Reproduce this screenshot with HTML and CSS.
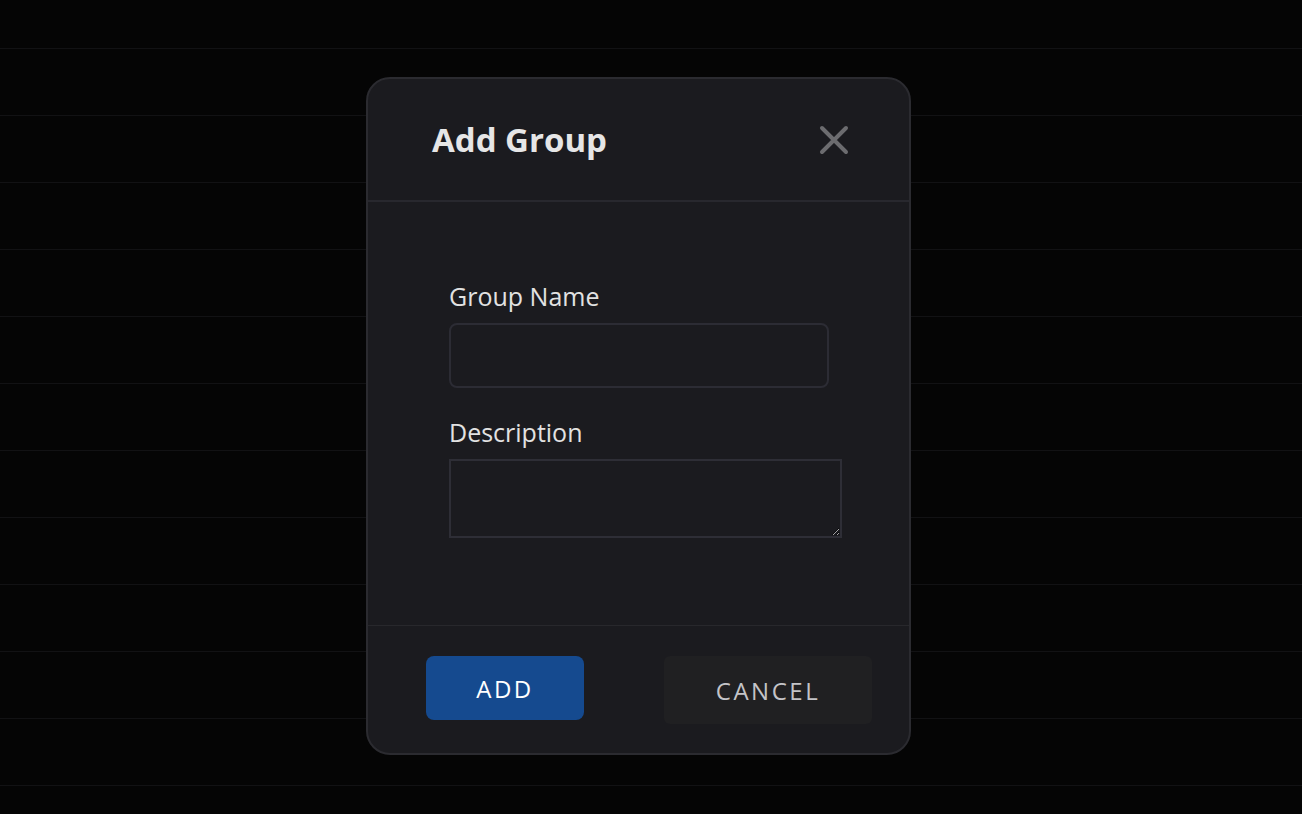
FILE: index.html
```html
<!DOCTYPE html>
<html lang="en">
<head>
  <meta charset="UTF-8" />
  <meta name="viewport" content="width=device-width, initial-scale=1" />
  <title>Add Group</title>
  <link rel="stylesheet" href="styles.css">
</head>
<body>
  <div class="modal">
    <div class="modal-header">
      <h2 class="modal-title">Add Group</h2>
      <button class="close-btn" aria-label="Close">
        <svg width="30" height="30" viewBox="0 0 30 30">
          <path d="M3 3 L27 27 M27 3 L3 27" stroke="#6c6c6f" stroke-width="4" stroke-linecap="round" fill="none" />
        </svg>
      </button>
    </div>

    <div class="modal-body">
      <div class="form-group">
        <label for="groupName">Group Name</label>
        <input type="text" id="groupName" />
      </div>
      <div class="form-group">
        <label for="description">Description</label>
        <textarea id="description"></textarea>
      </div>
    </div>

    <div class="modal-footer">
      <button class="btn btn-add">ADD</button>
      <button class="btn btn-cancel">CANCEL</button>
    </div>
  </div>
</body>
</html>
```

FILE: styles.css
```css
html,
body {
  margin: 0;
  height: 100%;
}
body {
  font-family: "Open Sans", Lato, sans-serif;
  background-color: #050505;
  background-image: linear-gradient(#121214 1px, transparent 1px);
  background-size: 100% 67px;
  background-position: 0 48px;
  color-scheme: dark;
  overflow: hidden;
}
.modal {
  width: 545px;
  box-sizing: border-box;
  margin: 77px 0 0 366px;
  background: #1b1b1f;
  border: 2px solid #2b2b30;
  border-radius: 24px;
}
.modal-header {
  height: 121px;
  display: flex;
  align-items: center;
  justify-content: space-between;
  padding: 0 60px 0 64px;
  border-bottom: 2px solid #28282e;
}
.modal-title {
  margin: 0;
  font-size: 33px;
  font-weight: 700;
  color: #e6e6e6;
}
.close-btn {
  background: none;
  border: none;
  padding: 0;
  width: 30px;
  height: 30px;
  cursor: pointer;
  display: flex;
}
.modal-body {
  padding: 79px 0 87px 81px;
}
.form-group label {
  display: block;
  font-size: 25px;
  line-height: 30px;
  color: #e2e2e2;
  margin-bottom: 12px;
}
.form-group + .form-group {
  margin-top: 29px;
}
.form-group input {
  display: block;
  box-sizing: border-box;
  width: 380px;
  height: 65px;
  background: #1b1b1f;
  border: 2px solid #2c2c34;
  border-radius: 8px;
  color: #e2e2e2;
  font: 22px "Open Sans", sans-serif;
  padding: 0 14px;
  outline: none;
}
.form-group textarea {
  display: block;
  box-sizing: border-box;
  width: 393px;
  height: 79px;
  background: #1b1b1f;
  border: 2px solid #2e2e36;
  border-radius: 0;
  color: #e2e2e2;
  font: 18px "Open Sans", sans-serif;
  outline: none;
  margin: 0;
}
.modal-footer {
  display: flex;
  justify-content: space-between;
  align-items: flex-start;
  height: 128px;
  box-sizing: border-box;
  padding: 30px 37px 0 58px;
  border-top: 1px solid #28282c;
}
.btn {
  border: none;
  font-family: "Open Sans", sans-serif;
  font-size: 24px;
  letter-spacing: 2.5px;
  cursor: pointer;
}
.btn-add {
  width: 158px;
  height: 64px;
  border-radius: 8px;
  background: #154a8f;
  color: #ffffff;
}
.btn-cancel {
  width: 208px;
  height: 68px;
  border-radius: 6px;
  background: #202022;
  color: #c4c4c8;
}
```
